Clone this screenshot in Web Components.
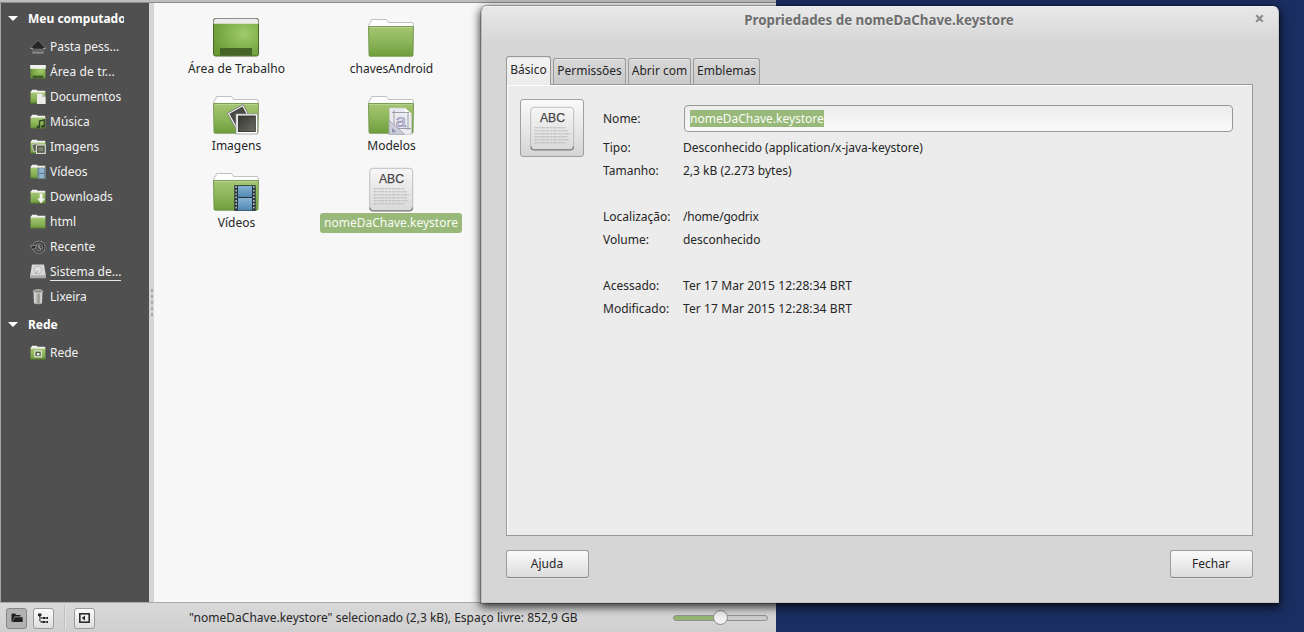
<!DOCTYPE html>
<html lang="pt-BR">
<head>
<meta charset="utf-8">
<title>Propriedades de nomeDaChave.keystore</title>
<style>
html,body{margin:0;height:100%;overflow:hidden}
body{font:12px/18px "Noto Sans","Open Sans",sans-serif;color:#262626;background:#1b2e61}
</style>
</head>
<body>
<desk-top>
  <file-manager>
    <side-bar slot="side">
      <side-head>Meu computado</side-head>
      <side-item icon="home">Pasta pess...</side-item>
      <side-item icon="desk" style="letter-spacing:.12px">Área de tr...</side-item>
      <side-item icon="docs" style="letter-spacing:-.08px">Documentos</side-item>
      <side-item icon="music">Música</side-item>
      <side-item icon="pics">Imagens</side-item>
      <side-item icon="video">Vídeos</side-item>
      <side-item icon="down">Downloads</side-item>
      <side-item icon="folder">html</side-item>
      <side-item icon="recent">Recente</side-item>
      <side-item icon="disk" usage>Sistema de...</side-item>
      <side-item icon="trash">Lixeira</side-item>
      <side-head>Rede</side-head>
      <side-item icon="net">Rede</side-item>
    </side-bar>
    <file-entry icon="desk" style="letter-spacing:.08px">Área de Trabalho</file-entry>
    <file-entry icon="folder">chavesAndroid</file-entry>
    <file-entry icon="pics">Imagens</file-entry>
    <file-entry icon="models">Modelos</file-entry>
    <file-entry icon="video">Vídeos</file-entry>
    <file-entry icon="text" selected>nomeDaChave.keystore</file-entry>
    <status-bar slot="status">"nomeDaChave.keystore" selecionado (2,3 kB), Espaço livre: 852,9 GB</status-bar>
  </file-manager>
  <props-dialog slot="dialog">
    <span slot="title">Propriedades de nomeDaChave.keystore</span>
    <tab-label slot="tabs" active style="width:45px">Básico</tab-label>
    <tab-label slot="tabs" style="width:73px">Permissões</tab-label>
    <tab-label slot="tabs" style="width:63px">Abrir com</tab-label>
    <tab-label slot="tabs" style="width:67px">Emblemas</tab-label>
    <prop-row tall><span slot="k">Nome:</span><text-entry>nomeDaChave.keystore</text-entry></prop-row>
    <prop-row style="--ls:-.03px"><span slot="k">Tipo:</span>Desconhecido (application/x-java-keystore)</prop-row>
    <prop-row gap><span slot="k">Tamanho:</span>2,3 kB (2.273 bytes)</prop-row>
    <prop-row style="--ls:-.2px"><span slot="k">Localização:</span>/home/godrix</prop-row>
    <prop-row gap style="--ls:-.05px"><span slot="k">Volume:</span>desconhecido</prop-row>
    <prop-row style="--ls:.09px"><span slot="k">Acessado:</span>Ter 17 Mar 2015 12:28:34 BRT</prop-row>
    <prop-row style="--ls:.09px"><span slot="k">Modificado:</span>Ter 17 Mar 2015 12:28:34 BRT</prop-row>
    <push-button slot="actions">Ajuda</push-button>
    <push-button slot="actions">Fechar</push-button>
  </props-dialog>
</desk-top>
<script>
const define = (name, html, setup) => customElements.define(name, class extends HTMLElement {
  constructor() {
    super();
    this.attachShadow({mode: 'open'}).innerHTML = '<style>*{box-sizing:border-box}</style>' + html;
  }
  connectedCallback() { if (setup) setup(this, this.shadowRoot); }
});

/* ---- large icons, 48x48 ---- */
const grads = `<defs>
<linearGradient id="f" x1="0" y1="0" x2="0" y2="1"><stop offset="0" stop-color="#a5c672"/><stop offset=".5" stop-color="#8db65a"/><stop offset="1" stop-color="#6f9d3d"/></linearGradient>
<radialGradient id="d" cx=".68" cy=".4" r=".75"><stop offset="0" stop-color="#a0cb6b"/><stop offset="1" stop-color="#689a33"/></radialGradient>
<linearGradient id="w" x1="0" y1="0" x2="0" y2="1"><stop offset="0" stop-color="#f6f6f6"/><stop offset="1" stop-color="#d9d9d9"/></linearGradient>
<linearGradient id="b" x1="0" y1="0" x2="0" y2="1"><stop offset="0" stop-color="#86b3d3"/><stop offset="1" stop-color="#5187b3"/></linearGradient>
<linearGradient id="k" x1="0" y1="0" x2="1" y2="1"><stop offset="0" stop-color="#35352f"/><stop offset="1" stop-color="#6b6d61"/></linearGradient></defs>`;
const folder = `<path d="M2 20V14.5L4 13V11.5Q4 10.5 5 10.5H19.5L21.5 13.5H45Q46.3 13.5 46.3 15V20Z" fill="#fdfdfd" stroke="#b9bab9" stroke-width=".9"/>
<path d="M1.5 17.5H46.5L46 46Q46 47.2 45 47.2H3Q2 47.2 2 46Z" fill="url(#f)" stroke="#6f944b" stroke-width=".9"/>
<path d="M2.3 18.5H45.8" stroke="#bcd596" stroke-width=".8"/>`;
const film = [0,1,2,3,4,5,6].map(i => `<path d="M23.4 ${24.2+i*3.4}h1.6m16 0h1.6" stroke="#b9c7cf" stroke-width="1.7"/>`).join('');
const BIG = {
  folder,
  desk: `<rect x="1.5" y="9.5" width="45" height="37.5" rx="2" fill="url(#d)" stroke="#48692a"/><path d="M2 14.8V11.5Q2 10 3.5 10H44.5Q46 10 46 11.5V14.8Z" fill="#ececec"/><path d="M1.5 15V11.5Q1.5 9.5 3.5 9.5H44.5Q46.5 9.5 46.5 11.5V15" fill="none" stroke="#8f908e"/><rect x="8" y="39" width="32" height="7.5" fill="#456527"/>`,
  pics: folder + `<g transform="rotate(-29 26 31)"><rect x="18.5" y="22.5" width="18" height="17" fill="#f5f5f5" stroke="#777" stroke-width=".8"/><rect x="20" y="24" width="15" height="14" fill="#484a46"/></g><rect x="24" y="28" width="21.5" height="20" fill="#fff" stroke="#999" stroke-width=".8"/><rect x="26.3" y="30" width="17" height="15.5" fill="url(#k)" stroke="#222" stroke-width=".8"/>`,
  models: folder + `<path d="M22.5 22H38L44.5 28V48.5H22.5Z" fill="#ececf0" stroke="#c9c9cf" stroke-width=".7"/><path d="M38 22V28H44.5" fill="#fff"/><path d="M27 24V44M25 26.5H42M41 26V44M25 42.5H44" stroke="#94949e" fill="none" stroke-width=".9"/><text x="28.5" y="40.5" font-family="Liberation Sans" font-size="19" fill="#d5d5ea" stroke="#9393b5" stroke-width=".7">a</text><path d="M22 34L37.5 48.3H22Z" fill="#cdcdd9" stroke="#a2a2ae" stroke-width=".8"/><path d="M25 42L29.5 46.3H25Z" fill="#8e8eae"/>`,
  video: folder + `<rect x="22.3" y="22.2" width="21.4" height="25.6" fill="#25313a"/><rect x="26" y="23" width="14" height="11" fill="url(#b)"/><rect x="26" y="35" width="14" height="12.4" fill="url(#b)"/>${film}`,
  text: `<g transform="translate(.5 .3)"><rect x="2.2" y="5" width="43" height="42.4" rx="3.2" fill="url(#w)" stroke="#b8b8b8" stroke-width=".9"/><path d="M2.4 44.2Q2.4 47.6 5.7 47.6H41.8Q45 47.6 45 44.2" fill="none" stroke="#808080" stroke-width="1.3"/><text x="11.5" y="20" font-family="Liberation Sans" font-size="13" textLength="25" lengthAdjust="spacingAndGlyphs" fill="#464646" stroke="#464646" stroke-width=".25">ABC</text><g stroke="#b4b4b4" stroke-width=".9" fill="none" stroke-dasharray="3.2 .7 2.1 .6 4.3 .7"><path d="M6 25.5h31"/><path d="M6 28.5h33"/><path d="M6 31.5h36"/><path d="M6 34.5h33"/><path d="M6 37.5h35"/><path d="M6 40.5h31"/></g></g>`
};
define('file-icon', `<style>:host{display:block;width:48px;height:48px}svg{display:block}</style><div></div>`, (el, r) => {
  r.querySelector('div').innerHTML = `<svg width="48" height="48" viewBox="0 0 48 48" style="overflow:visible">${grads}${BIG[el.getAttribute('name')]}</svg>`;
});

/* ---- sidebar icons, 16x16 ---- */
const sf = `<path d="M.8 5V1.8H2V.8H6.8L7.6 1.8H15.2V5Z" fill="#f1f1ef"/><path d="M.6 3.6H15.4V14.2H.6Z" fill="url(#f)"/><path d="M.6 14H15.4" stroke="#55792f" stroke-width=".8"/>`;
const SMALL = {
  folder: sf,
  home: `<path d="M8 1.2L15.8 9.4H13.5V14H2.5V9.4H.2Z" fill="#262626" stroke="#8a8a8a" stroke-width=".6"/><path d="M2.8 9.6H13.2V14H2.8Z" fill="#636363"/><path d="M2.5 13.8H13.5M.4 9.4H3M13 9.4H15.6" stroke="#b0b0b0" stroke-width=".8"/>`,
  desk: `<rect x=".6" y="1.2" width="14.8" height="13.2" fill="url(#d)"/><rect x=".2" y="1" width="15.6" height="3.8" fill="#f1f1ef"/><rect x="2.6" y="11.6" width="10.8" height="2.8" fill="#3f5c26"/>`,
  docs: sf + `<path d="M7 4.8H12L15.6 8.2V15H7Z" fill="#ececec"/><path d="M12 4.8V8.2H15.6" fill="#c4c4c4"/>`,
  music: sf + `<path d="M9.5 13V7L14.3 5.8V12" fill="none" stroke="#30402a" stroke-width="1.3"/><ellipse cx="8.4" cy="13" rx="1.8" ry="1.4" fill="#30402a"/><ellipse cx="13" cy="12.3" rx="1.8" ry="1.4" fill="#30402a"/>`,
  pics: sf + `<path d="M2 6L8 4L9 10L4 13Z" fill="#5c6455" stroke="#ccc" stroke-width=".8"/><rect x="6.5" y="6" width="8.8" height="8.4" fill="#555b4d" stroke="#dcdcd8" stroke-width="1.1"/><rect x="8.6" y="8.2" width="4.6" height="4" fill="#7d8471"/>`,
  video: sf + `<rect x="7.4" y="3.8" width="8.4" height="11" fill="#587080"/><path d="M9.2 4.2H14V14.4H9.2Z" fill="#8fb5d0"/><path d="M9.2 9.4H14" stroke="#56748a"/><path d="M8.2 4.4V15M15 4.4V15" stroke="#c4d2d8" stroke-width=".8" stroke-dasharray="1 1"/>`,
  down: sf + `<path d="M9.6 4.5H12.6V9.5H15L11.1 14.5L7.3 9.5H9.6Z" fill="#f1f1ed"/>`,
  recent: `<circle cx="9" cy="8.2" r="5" fill="none" stroke="#a0a0a0" stroke-width="2.8"/><circle cx="9" cy="8.2" r="5" fill="none" stroke="#2c2c2c" stroke-width="1.5"/><path d="M9 5.8V8.5L11 10" fill="none" stroke="#bababa"/><path d="M0 6.6H7L3.4 11Z" fill="#2c2c2c" stroke="#a0a0a0" stroke-width=".7"/>`,
  disk: `<path d="M2 .5H14L15.8 11V14H.2V11Z" fill="#d6d6d6"/><path d="M.2 11.3H15.8V14.3H.2Z" fill="#a8a8a8"/><circle cx="8" cy="6" r="3.6" fill="#e3e3e3" stroke="#b9b9b9"/><path d="M5 9.8L8.4 6.2" stroke="#999"/>`,
  trash: `<path d="M3.4 2.4H12.6L12 14.4Q8 16 4 14.4Z" fill="#b9bbb5"/><path d="M4.8 4V14M11.2 4V14" stroke="#dededb" stroke-width="1.2"/><path d="M8.6 4V14.8" stroke="#90938b" stroke-width="1.8"/><ellipse cx="8" cy="2.4" rx="4.7" ry="1.7" fill="#868b7e" stroke="#e2e2e0" stroke-width=".8"/>`,
  net: sf + `<rect x="4.9" y="6" width="6.4" height="5.8" fill="#4c5f38" stroke="#eee" stroke-width="1.1"/><rect x="7" y="8" width="2.4" height="2.4" fill="#f2f2f2"/>`
};
define('side-head', `<style>:host{display:flex;align-items:center;height:31px;padding-left:7px;font-weight:bold;color:#fff;gap:10px;white-space:nowrap}span{max-width:96px;overflow:hidden}</style>
<svg width="10" height="5" viewBox="0 0 10 5"><path d="M0 0H10L5 5Z" fill="#fff"/></svg><span><slot></slot></span>`);
define('side-item', `<style>:host{display:flex;align-items:center;height:25px;padding-left:29px;gap:4px;color:#f2f2f2;white-space:nowrap}
i{display:block;width:16px;height:16px}svg{display:block}
span{display:block;height:18px}:host([usage]) span{box-shadow:inset 0 -1px #e8e8e8}</style>
<i></i><span><slot></slot></span>`, (el, r) => {
  r.querySelector('i').innerHTML = `<svg width="16" height="16" viewBox="0 0 16 16">${grads}${SMALL[el.getAttribute('icon')]}</svg>`;
});
define('side-bar', `<style>:host{display:block;background:#505050;height:100%}</style><slot></slot>`);

define('file-entry', `<style>:host{display:flex;flex-direction:column;align-items:center;gap:2px;height:77px}
span{height:20px;line-height:19px;padding:0 3px 0 4px;border-radius:3px;white-space:nowrap}
:host([selected]) span{background:#98b97a;color:#f8fbf4;padding-right:4px}</style><file-icon></file-icon><span><slot></slot></span>`, (el, r) => {
  const icon = document.createElement('file-icon');
  icon.setAttribute('name', el.getAttribute('icon'));
  r.querySelector('file-icon').replaceWith(icon);
});

define('status-bar', `<style>:host{display:flex;align-items:center;height:30px;padding:0 7px 0 6px;background:linear-gradient(#d9d9d9,#cfcfcf);border-top:1px solid #ababab;border-bottom:1px solid #a2a2a2}
.b{width:21px;height:21px;border:1px solid #9b9b9b;border-radius:3px;background:linear-gradient(#fbfbfb,#dedede);display:grid;place-items:center;margin-right:6px;flex:none}
.on{background:#b2b2b2;border-color:#858585}
.sep{width:1px;height:24px;background:#c0c0c0;margin:0 9px 0 4px;box-shadow:1px 0 #e4e4e4}
.t{margin-left:88px;width:484px;white-space:nowrap;letter-spacing:.015px}
.s{width:95px;height:14px;display:grid;align-items:center;position:relative;top:-1px}
.s>*{grid-area:1/1}.track{height:6px;border:1px solid #909090;border-radius:3px;background:linear-gradient(90deg,#93b570 48%,#cbcbcb 48%)}
.thumb{width:15px;height:15px;border:1px solid #8b8b8b;border-radius:50%;background:#efefef;margin-left:40px}</style>
<div class="b on"><svg width="12" height="10" viewBox="0 0 12 10"><path d="M.5 9V1.5Q.5.5 1.5.5H4L5.2 2H9.5V3.5H3.5L1.5 8.5Z" fill="#1f1f1f"/><path d="M3.8 4.3H11.7V9H1.5Z" fill="#1f1f1f"/></svg></div>
<div class="b"><svg width="11" height="11" viewBox="0 0 11 11"><path d="M0 .5H3.4V3H0ZM1 3H2.4V9.5H5V8.3H1.5M1.5 5.5H4V4.3H1.5Z" fill="#222"/><path d="M4.5 5H7.5M4.5 9H7.5M8.3 5H10M8.3 9H10" stroke="#222" stroke-width="1.8"/></svg></div>
<div class="sep"></div>
<div class="b"><svg width="11" height="10" viewBox="0 0 11 10"><rect x=".8" y=".8" width="9.4" height="8.4" fill="none" stroke="#222" stroke-width="1.5"/><path d="M6 2.6V7.4L2.8 5Z" fill="#222"/></svg></div>
<div class="t"><slot></slot></div><div class="s"><div class="track"></div><div class="thumb"></div></div>`);

define('file-manager', `<style>:host{display:grid;width:776px;height:632px;grid-template:3px 599px 30px/149px 5px 1fr;background:#d5d5d5}
.top{grid-column:1/-1;background:#bdbdbd;border-bottom:1px solid #8c8c8c}
.side{border-left:1px solid #a5a5a5}
.grip{display:flex;flex-direction:column;align-items:center;justify-content:center;gap:3px}
.grip i{width:2px;height:3px;background:#aaa}
.files{background:#f7f7f7;display:grid;grid-template-columns:155px 155px;grid-auto-rows:77px;align-content:start;padding:6px 0 0 4.5px}
.bar{grid-column:1/-1}</style>
<div class="top"></div><div class="side"><slot name="side"></slot></div><div class="grip"><i></i><i></i><i></i><i></i><i></i></div>
<div class="files"><slot></slot></div><div class="bar"><slot name="status"></slot></div>`);

define('tab-label', `<style>:host{display:flex;justify-content:center;box-sizing:border-box;height:26px;padding-top:3px;border:1px solid #999;border-bottom:0;border-radius:3px 3px 0 0;background:linear-gradient(#d8d8d8,#cacaca);white-space:nowrap;box-shadow:inset 0 1px #e6e6e6}
:host([active]){height:29px;margin-bottom:-1px;padding-top:4px;background:linear-gradient(#f3f3f3,#ececec);z-index:1}</style><slot></slot>`);
define('text-entry', `<style>:host{display:flex;align-items:center;box-sizing:border-box;width:549px;height:27px;margin-left:1px;padding-left:5px;border:1px solid #999;border-radius:4px;background:linear-gradient(#ececec,#fafafa)}
span{background:#98b97a;color:#fbfdf8;height:17px;line-height:17px;white-space:nowrap}</style><span><slot></slot></span>`);
define('prop-row', `<style>:host{display:grid;grid-template-columns:80px 1fr;align-items:center;height:23px;white-space:nowrap}
div{letter-spacing:var(--ls,0)}
:host([tall]){height:27px;margin-bottom:4px}:host([gap]){margin-bottom:23px}</style><slot name="k"></slot><div><slot></slot></div>`);
define('push-button', `<style>:host{display:grid;place-items:center;box-sizing:border-box;width:83px;height:28px;padding-right:1px;border:1px solid #9c9c9c;border-bottom-color:#888;border-radius:3px;background:linear-gradient(#fbfbfb,#dcdcdc);box-shadow:0 1px #e2e2e2}</style><slot></slot>`);
define('props-dialog', `<style>:host{display:flex;flex-direction:column;box-sizing:border-box;width:798px;height:597px;border:1px solid #f0f0f0;border-left-color:#bdbdbd;border-right-color:#c4c4c4;border-bottom-color:#c4c4c4;border-radius:6px 6px 0 0;background:linear-gradient(#e8e8e8,#d6d6d6 36px);box-shadow:0 0 0 1px rgba(0,0,0,.22),0 3px 10px 1px rgba(0,0,0,.8);padding:0 24px 24px}
header{display:grid;grid-template-columns:1fr auto 1fr;width:746px;height:49px;padding-top:4px;align-items:start;font-weight:bold;font-size:13.33px;color:#6d6d6d;text-shadow:0 1px #eee}
header svg{justify-self:end;margin:3px -12px 0 0}
nav{display:flex;align-items:flex-end;gap:2px;height:28px}
main{position:relative;display:flex;gap:19px;width:747px;height:452px;border:1px solid #999;box-shadow:inset 1px 1px #fff;background:#ececec}
.ic{margin:14px 0 0 13px;width:64px;height:58px;border:1px solid #a0a0a0;border-radius:3px;background:linear-gradient(#fafafa,#d5d5d5);display:grid;justify-content:center;padding-top:2px}
.rows{padding-top:20px}
footer{display:flex;justify-content:space-between;width:747px;margin-top:14px}</style>
<header><i></i><div><slot name="title"></slot></div><svg width="9" height="9" viewBox="0 0 9 9"><path d="M1.2 1.2L7.8 7.8M7.8 1.2L1.2 7.8" stroke="#8b8b8b" stroke-width="2.2"/></svg></header>
<nav><slot name="tabs"></slot></nav>
<main><div class="ic"><file-icon name="text"></file-icon></div><div class="rows"><slot></slot></div></main>
<footer><slot name="actions"></slot></footer>`);
define('desk-top', `<style>:host{display:block;position:relative;width:1304px;height:632px;overflow:hidden;background:#1b2e61}
.win{position:absolute;left:481px;top:6px}</style><slot></slot><div class="win"><slot name="dialog"></slot></div>`);
</script>
</body>
</html>
